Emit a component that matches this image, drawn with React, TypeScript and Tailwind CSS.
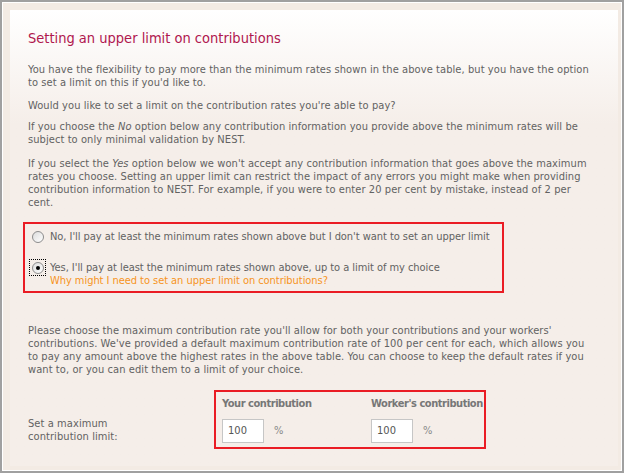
import React from 'react';

const FONT = "font-['DejaVu_Sans_Condensed','DejaVu_Sans',sans-serif]";

const Radio = ({ checked }: { checked?: boolean }) => (
  <span
    className={`flex items-center justify-center w-[15px] h-[15px] shrink-0 ${
      checked ? 'outline-1 outline-dotted outline-black' : ''
    }`}
  >
    <span className="flex items-center justify-center w-[12px] h-[12px] rounded-full border border-[#8c8c8c] bg-gradient-to-br from-[#dcdcdc] to-white">
      {checked && <span className="w-[4px] h-[4px] rounded-full bg-black" />}
    </span>
  </span>
);

const LimitInput = ({ label }: { label: string }) => (
  <div className="flex flex-col">
    <span className="font-bold text-[#777] leading-[13px] whitespace-nowrap tracking-[-0.45px]">{label}</span>
    <div className="flex items-center mt-[9px]">
      <div className="w-[42px] h-[24px] border border-[#c6c6c6] bg-white flex items-center pl-[5px] text-[#555]">
        100
      </div>
      <span className="ml-[10px] text-[#888]">%</span>
    </div>
  </div>
);

const Lines = ({ lines, className = '' }: { lines: React.ReactNode[]; className?: string }) => (
  <p className={`leading-[13px] whitespace-nowrap ${className}`}>
    {lines.map((l, i) => (
      <span key={i} className="block">
        {l}
      </span>
    ))}
  </p>
);

export default function App() {
  return (
    <div
      className={`w-[624px] h-[473px] border-2 border-[#a0a0a0] bg-white p-px ${FONT} text-[11px] tracking-[0.08px] text-[#626262]`}
    >
      <div className="h-full bg-[#f3ebe4] p-[7px] pb-[4px] pr-[3px]">
        <div className="h-full bg-gradient-to-b from-white to-[#f5eee9] to-[25%] pl-[18px] pr-[20px] pt-[18px]">
          <h2 className="text-[14.5px] leading-[20px] tracking-normal text-[#b0174e]">
            Setting an upper limit on contributions
          </h2>

          <Lines
            className="mt-[15px]"
            lines={[
              'You have the flexibility to pay more than the minimum rates shown in the above table, but you have the option',
              "to set a limit on this if you'd like to.",
            ]}
          />
          <Lines
            className="mt-[10px]"
            lines={["Would you like to set a limit on the contribution rates you're able to pay?"]}
          />
          <Lines
            className="mt-[8px]"
            lines={[
              <>
                If you choose the <em>No</em> option below any contribution information you provide above the minimum rates will be
              </>,
              'subject to only minimal validation by NEST.',
            ]}
          />
          <Lines
            className="mt-[11px]"
            lines={[
              <>
                If you select the <em>Yes</em> option below we won't accept any contribution information that goes above the maximum
              </>,
              'rates you choose. Setting an upper limit can restrict the impact of any errors you might make when providing',
              'contribution information to NEST. For example, if you were to enter 20 per cent by mistake, instead of 2 per',
              'cent.',
            ]}
          />

          <div className="mt-[13px] ml-[-5px] w-[481px] h-[71px] border-2 border-[#ea1c24] pl-[5px] pt-[5px] whitespace-nowrap tracking-[-0.05px]">
            <div className="flex items-center gap-[5px] leading-[13px]">
              <Radio />
              <span>No, I'll pay at least the minimum rates shown above but I don't want to set an upper limit</span>
            </div>
            <div className="flex items-start gap-[5px] leading-[13px] mt-[17px]">
              <div className="mt-[-1px]">
                <Radio checked />
              </div>
              <div className="flex flex-col">
                <span>Yes, I'll pay at least the minimum rates shown above, up to a limit of my choice</span>
                <span className="text-[#f7941d]">Why might I need to set an upper limit on contributions?</span>
              </div>
            </div>
          </div>

          <Lines
            className="mt-[31px]"
            lines={[
              "Please choose the maximum contribution rate you'll allow for both your contributions and your workers'",
              "contributions. We've provided a default maximum contribution rate of 100 per cent for each, which allows you",
              'to pay any amount above the highest rates in the above table. You can choose to keep the default rates if you',
              'want to, or you can edit them to a limit of your choice.',
            ]}
          />

          <div className="flex items-start mt-[14px]">
            <div className="w-[186px] shrink-0 pt-[27px] leading-[13px]">
              Set a maximum
              <br />
              contribution limit:
            </div>
            <div className="flex w-[272px] h-[59px] border-2 border-[#ea1c24] pl-[6px] pt-[5px]">
              <div className="w-[149px] shrink-0">
                <LimitInput label="Your contribution" />
              </div>
              <LimitInput label="Worker's contribution" />
            </div>
          </div>
        </div>
      </div>
    </div>
  );
}
